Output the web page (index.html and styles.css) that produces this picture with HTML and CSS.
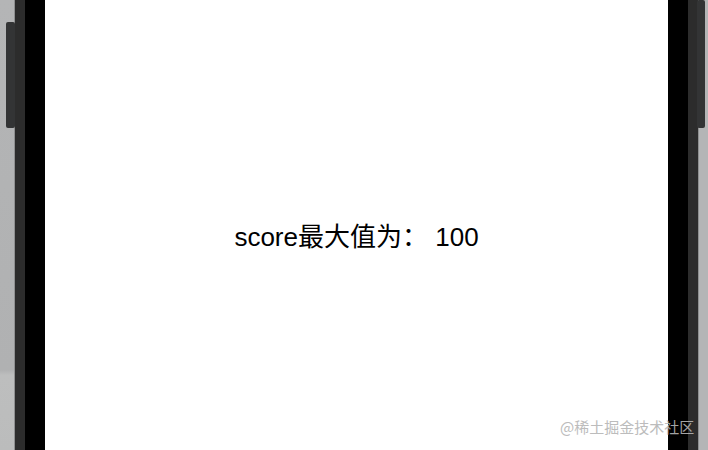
FILE: index.html
```html
<!DOCTYPE html>
<html lang="zh-CN">
<head>
<meta charset="utf-8">
<link rel="stylesheet" href="styles.css">
</head>
<body>
<div class="frame">
  <div class="outer-left"></div>
  <div class="edge"></div>
  <div class="rim"></div>
  <div class="bezel"></div>
  <div class="screen">
    <p class="score">score最大值为： 100</p>
  </div>
  <div class="bezel"></div>
  <div class="rim"></div>
  <div class="edge"></div>
  <div class="outer-right"></div>
  <div class="btn btn-left"></div>
  <div class="btn btn-right"></div>
  <div class="watermark">@稀土掘金技术社区</div>
</div>
</body>
</html>
```
FILE: styles.css
```css
html, body {
  margin: 0;
  padding: 0;
}
body {
  width: 708px;
  height: 450px;
  overflow: hidden;
}
.frame {
  position: relative;
  display: flex;
  width: 708px;
  height: 450px;
}
.outer-left {
  width: 14px;
  background: linear-gradient(#b4b5b6 0, #b0b1b2 370px, #bdbebe 375px, #bbbcbc 450px);
}
.outer-right {
  flex: 1;
  background: #b4b5b6;
}
.edge {
  width: 1px;
  background: #8f9091;
}
.rim {
  width: 10px;
  background: #2c2c2c;
}
.bezel {
  width: 20px;
  background: #000;
}
.screen {
  width: 623px;
  background: #fff;
  display: flex;
  align-items: center;
  justify-content: center;
}
.score {
  margin: 0;
  padding-top: 18px;
  font-family: "Liberation Sans", "Noto Sans CJK SC", sans-serif;
  font-size: 26px;
  color: #000;
}
.btn {
  position: absolute;
  background: #333435;
  border-radius: 2px;
}
.btn-left {
  left: 6px;
  top: 22px;
  width: 9px;
  height: 106px;
}
.btn-right {
  left: 697px;
  top: 0;
  width: 8px;
  height: 128px;
}
.watermark {
  position: absolute;
  left: 560px;
  top: 416px;
  font-family: "Noto Sans CJK SC", sans-serif;
  font-size: 15px;
  color: #b5b5b5;
  opacity: 0.9;
  white-space: nowrap;
}
```
